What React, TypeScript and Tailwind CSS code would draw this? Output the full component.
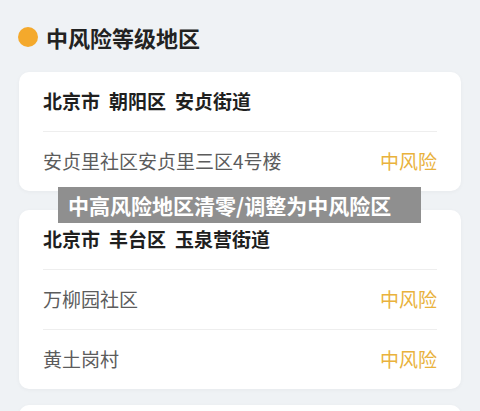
import React from "react";

const font = { fontFamily: '"Noto Sans CJK SC", "Noto Sans", sans-serif' };

function Row({ name }: { name: string }) {
  return (
    <div className="mx-6 flex h-[60px] items-center justify-between border-t border-[#eeeeee]">
      <span className="text-[19px] text-[#5c5c5c]">{name}</span>
      <span className="text-[19px] text-[#e9b23c]">中风险</span>
    </div>
  );
}

function Card({ title, rows }: { title: string[]; rows: string[] }) {
  return (
    <div className="rounded-[10px] bg-white shadow-[0_1px_4px_rgba(0,0,0,0.04)]">
      <div className="flex h-[59px] items-center gap-[9px] px-6">
        {title.map((t) => (
          <span key={t} className="text-[19px] font-bold text-[#1f1f1f]">{t}</span>
        ))}
      </div>
      {rows.map((r) => (
        <Row key={r} name={r} />
      ))}
    </div>
  );
}

export default function App() {
  return (
    <div className="relative h-[411px] w-[480px] overflow-hidden bg-[#eff2f5]" style={font}>
      <div className="px-[19px] pt-[24px]">
        <div className="flex h-[26px] items-center gap-[8px] -ml-px">
          <div className="h-[20px] w-[20px] rounded-full bg-[#f4a92c]" />
          <span className="text-[22px] font-bold leading-none text-[#222222]">中风险等级地区</span>
        </div>
        <div className="mt-[22px] flex flex-col gap-[19px]">
          <Card title={["北京市", "朝阳区", "安贞街道"]} rows={["安贞里社区安贞里三区4号楼"]} />
          <Card title={["北京市", "丰台区", "玉泉营街道"]} rows={["万柳园社区", "黄土岗村"]} />
          <div className="-mt-[3px] h-[60px] rounded-[10px] bg-white shadow-[0_1px_4px_rgba(0,0,0,0.04)]" />
        </div>
      </div>
      <div className="absolute left-[58px] top-[187px] flex h-[36px] w-[363px] items-center bg-[#8f8f8f] pl-[10px]">
        <span className="text-[21px] font-bold leading-none text-white">中高风险地区清零/调整为中风险区</span>
      </div>
    </div>
  );
}
